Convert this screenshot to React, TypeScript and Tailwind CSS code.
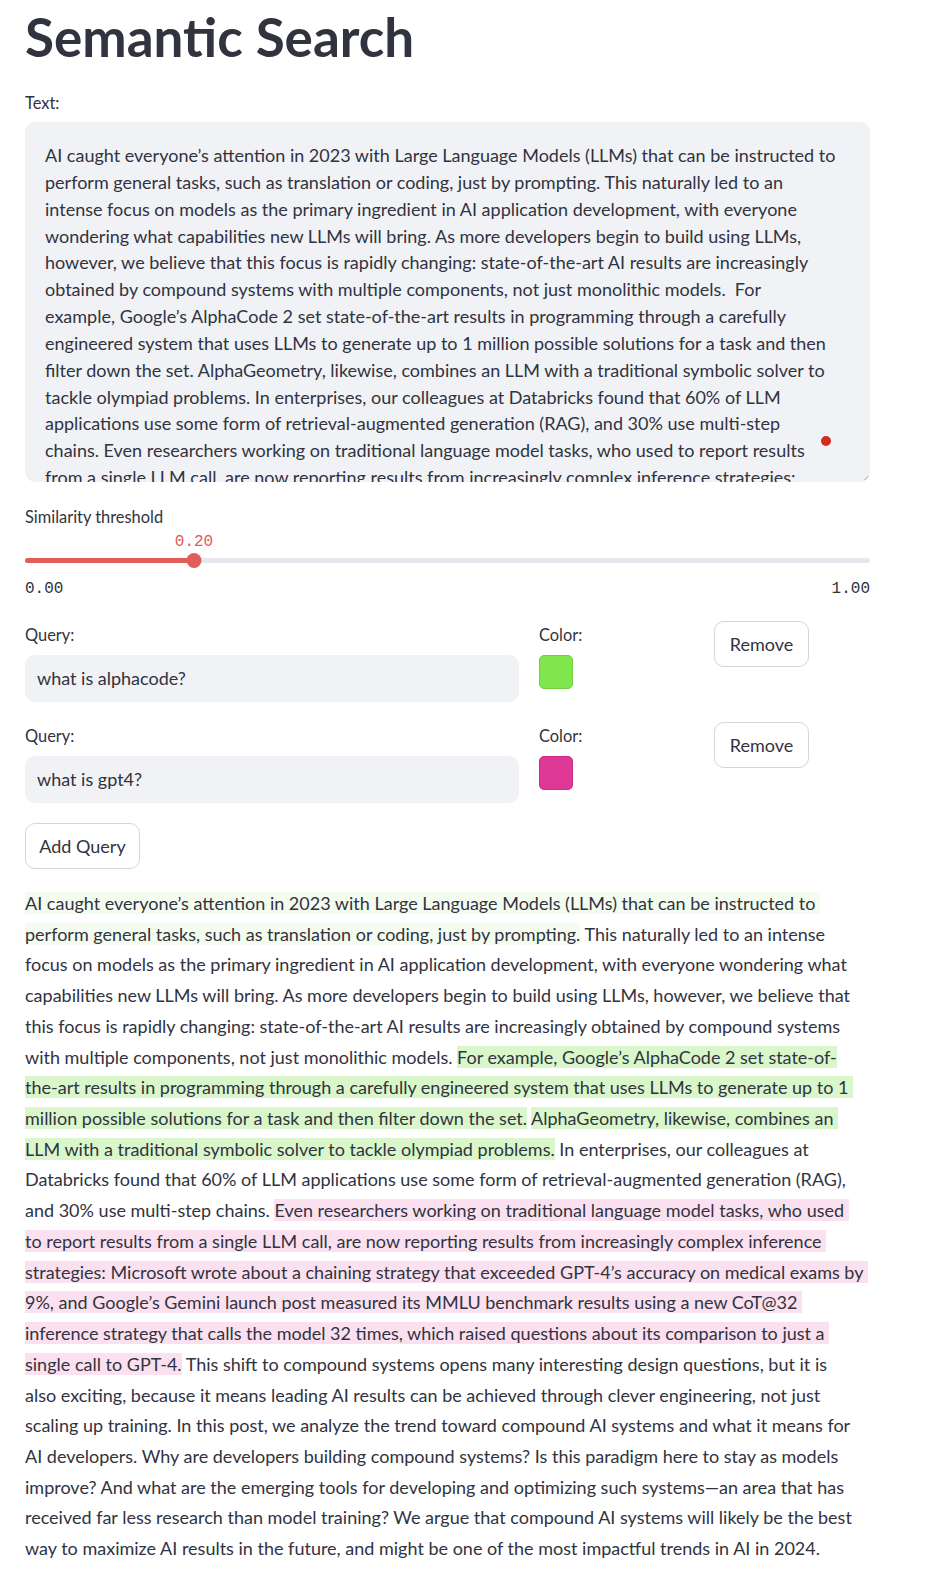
import React from "react";

type Tone = "faint" | "green" | "pink";
type Seg = [string, Tone?];

const toneClass: Record<Tone, string> = {
  faint: "bg-[#f4fcef]",
  green: "bg-[#d9f7cb]",
  pink: "bg-[#fbe1ef]",
};

const textareaLines = [
  "AI caught everyone’s attention in 2023 with Large Language Models (LLMs) that can be instructed to",
  "perform general tasks, such as translation or coding, just by prompting. This naturally led to an",
  "intense focus on models as the primary ingredient in AI application development, with everyone",
  "wondering what capabilities new LLMs will bring. As more developers begin to build using LLMs,",
  "however, we believe that this focus is rapidly changing: state-of-the-art AI results are increasingly",
  "obtained by compound systems with multiple components, not just monolithic models.  For",
  "example, Google’s AlphaCode 2 set state-of-the-art results in programming through a carefully",
  "engineered system that uses LLMs to generate up to 1 million possible solutions for a task and then",
  "filter down the set. AlphaGeometry, likewise, combines an LLM with a traditional symbolic solver to",
  "tackle olympiad problems. In enterprises, our colleagues at Databricks found that 60% of LLM",
  "applications use some form of retrieval-augmented generation (RAG), and 30% use multi-step",
  "chains. Even researchers working on traditional language model tasks, who used to report results",
  "from a single LLM call, are now reporting results from increasingly complex inference strategies:",
];

const resultLines: Seg[][] = [
  [["AI caught everyone’s attention in 2023 with Large Language Models (LLMs) that can be instructed to ", "faint"]],
  [["perform general tasks, such as translation or coding, just by prompting.", "faint"], [" This naturally led to an intense"]],
  [["focus on models as the primary ingredient in AI application development, with everyone wondering what"]],
  [["capabilities new LLMs will bring. As more developers begin to build using LLMs, however, we believe that"]],
  [["this focus is rapidly changing: state-of-the-art AI results are increasingly obtained by compound systems"]],
  [["with multiple components, not just monolithic models. "], ["For example, Google’s AlphaCode 2 set state-of-", "green"]],
  [["the-art results in programming through a carefully engineered system that uses LLMs to generate up to 1 ", "green"]],
  [["million possible solutions for a task and then filter down the set.", "green"], [" "], ["AlphaGeometry, likewise, combines an ", "green"]],
  [["LLM with a traditional symbolic solver to tackle olympiad problems.", "green"], [" In enterprises, our colleagues at"]],
  [["Databricks found that 60% of LLM applications use some form of retrieval-augmented generation (RAG),"]],
  [["and 30% use multi-step chains. "], ["Even researchers working on traditional language model tasks, who used ", "pink"]],
  [["to report results from a single LLM call, are now reporting results from increasingly complex inference ", "pink"]],
  [["strategies: Microsoft wrote about a chaining strategy that exceeded GPT-4’s accuracy on medical exams by ", "pink"]],
  [["9%, and Google’s Gemini launch post measured its MMLU benchmark results using a new CoT@32 ", "pink"]],
  [["inference strategy that calls the model 32 times, which raised questions about its comparison to just a ", "pink"]],
  [["single call to GPT-4.", "pink"], [" This shift to compound systems opens many interesting design questions, but it is"]],
  [["also exciting, because it means leading AI results can be achieved through clever engineering, not just"]],
  [["scaling up training. In this post, we analyze the trend toward compound AI systems and what it means for"]],
  [["AI developers. Why are developers building compound systems? Is this paradigm here to stay as models"]],
  [["improve? And what are the emerging tools for developing and optimizing such systems—an area that has"]],
  [["received far less research than model training? We argue that compound AI systems will likely be the best"]],
  [["way to maximize AI results in the future, and might be one of the most impactful trends in AI in 2024."]],
];

const queries = [
  { text: "what is alphacode?", swatch: "bg-[#80e64d] border-[#6fcf40]" },
  { text: "what is gpt4?", swatch: "bg-[#de3796] border-[#c92f86]" },
];

function Label({ children }: { children: React.ReactNode }) {
  return <div className="h-[24px] text-[16.4px] leading-[27px]">{children}</div>;
}

function Button({ children, width }: { children: React.ReactNode; width: string }) {
  return (
    <button
      className={`${width} h-[46px] rounded-[10px] border border-[#d6d6d9] bg-white text-[18px] text-[#31333f]`}
    >
      {children}
    </button>
  );
}

function SimilaritySlider({ value }: { value: number }) {
  const pct = `${value * 100}%`;
  return (
    <div>
      <Label>Similarity threshold</Label>
      <div className="relative h-[28px]">
        <span
          className="absolute -translate-x-1/2 font-['Liberation_Mono',monospace] text-[16px] leading-[30px] text-[#e25c58]"
          style={{ left: pct }}
        >
          {value.toFixed(2)}
        </span>
      </div>
      <div className="relative flex h-[10px] items-center">
        <div className="h-[5px] w-full rounded-full bg-[#e6e8ee]" />
        <div className="absolute left-0 h-[5px] rounded-full bg-[#e25c58]" style={{ width: pct }} />
        <div
          className="absolute h-[15px] w-[15px] -translate-x-1/2 rounded-full bg-[#e25c58]"
          style={{ left: pct }}
        />
      </div>
      <div className="flex h-[44px] items-center justify-between pt-[4px] font-['Liberation_Mono',monospace] text-[16px]">
        <span>0.00</span>
        <span>1.00</span>
      </div>
    </div>
  );
}

export default function App() {
  return (
    <div className="min-h-screen bg-white font-['Lato',sans-serif] text-[#31333f]">
      <div className="ml-[25px] w-[845px] pt-[6px] pb-[20px]">
        <h1 className="text-[53px] font-bold leading-[62px]">Semantic Search</h1>

        <div className="mt-[21px]">
          <Label>Text:</Label>
        </div>
        <div className="relative mt-[9px] h-[360px] overflow-hidden rounded-[10px] bg-[#f0f2f6] px-[20px] pt-[20px]">
          {textareaLines.map((l, i) => (
            <div key={i} className="whitespace-pre text-[18px] leading-[26.85px]">
              {l}
            </div>
          ))}
          <div className="absolute left-[796px] top-[314px] h-[10px] w-[10px] rounded-full bg-[#d42c1f]" />
          <svg className="absolute bottom-[1px] right-[1px]" width="6" height="6" viewBox="0 0 6 6">
            <path d="M5.5 1 L1 5.5 M5.5 3.5 L3.5 5.5" stroke="#8a8c92" strokeWidth="0.8" />
          </svg>
        </div>

        <div className="mt-[21px]">
          <SimilaritySlider value={0.2} />
        </div>

        <div className="mt-[12px] flex flex-col gap-[20px]">
          {queries.map((q, i) => (
            <div key={i} className="grid grid-cols-[494px_155px_156px] gap-x-[20px]">
              <div>
                <Label>Query:</Label>
                <div className="mt-[10px] flex h-[47px] items-center rounded-[10px] bg-[#f0f2f6] px-[12px] text-[18px]">
                  {q.text}
                </div>
              </div>
              <div>
                <Label>Color:</Label>
                <div className={`mt-[10px] h-[34px] w-[34px] rounded-[5px] border ${q.swatch}`} />
              </div>
              <div>
                <Button width="w-[95px]">Remove</Button>
              </div>
            </div>
          ))}
        </div>

        <div className="mt-[20px]">
          <Button width="w-[115px]">Add Query</Button>
        </div>

        <div className="mt-[19px] text-[18px] leading-[30.72px]">
          {resultLines.map((segs, i) => (
            <div key={i} className="whitespace-pre">
              {segs.map(([t, tone], j) => (
                <span key={j} className={tone ? toneClass[tone] : ""}>
                  {t}
                </span>
              ))}
            </div>
          ))}
        </div>
      </div>
    </div>
  );
}
